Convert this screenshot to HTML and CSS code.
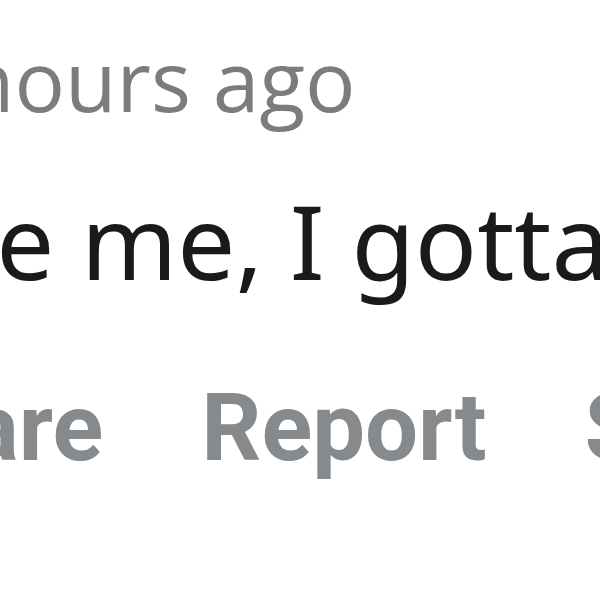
FILE: index.html
```html
<!DOCTYPE html>
<html lang="en">
<head>
<meta charset="utf-8">
<title>Comment</title>
<link rel="stylesheet" href="styles.css">
</head>
<body>
<div class="comment">
  <div class="meta"><span class="meta-text">hours ago</span></div>
  <div class="body"><span class="body-text">like me, I gotta go</span></div>
  <div class="actions">
    <span class="action">Share</span>
    <span class="action">Report</span>
    <span class="action">Save</span>
  </div>
</div>
</body>
</html>
```
FILE: styles.css
```css
html, body {
  margin: 0;
  padding: 0;
  background: #ffffff;
}
.comment {
  width: 600px;
  height: 600px;
  overflow: hidden;
  padding-top: 30px;
  box-sizing: border-box;
}
.meta {
  font-family: "Open Sans", sans-serif;
  font-size: 84px;
  line-height: 100px;
  color: #7c7c7c;
  white-space: nowrap;
}
.meta-text {
  display: inline-block;
  margin-left: -37px;
}
.body {
  margin-top: 50px;
  font-family: "Noto Sans", sans-serif;
  font-size: 103px;
  line-height: 120px;
  color: #1a1a1b;
  white-space: nowrap;
}
.body-text {
  display: inline-block;
  margin-left: -112px;
}
.actions {
  margin-top: 78px;
  display: flex;
  gap: 98px;
  margin-left: -142px;
  font-family: "Roboto", sans-serif;
  font-weight: 700;
  font-size: 94px;
  line-height: 100px;
  color: #878a8c;
  white-space: nowrap;
}
```
